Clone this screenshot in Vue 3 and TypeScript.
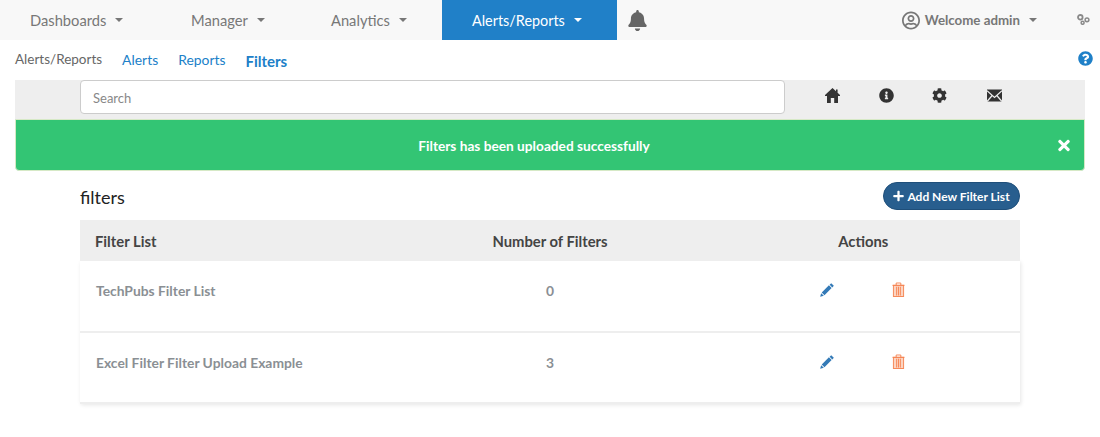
<script setup lang="ts">
interface Row { name: string; count: number }
const navItems: { label: string; active?: boolean; width: number }[] = [
  { label: 'Dashboards', width: 161 },
  { label: 'Manager', width: 140 },
  { label: 'Analytics', width: 141 },
  { label: 'Alerts/Reports', active: true, width: 175 },
]
const rows: Row[] = [
  { name: 'TechPubs Filter List', count: 0 },
  { name: 'Excel Filter Filter Upload Example', count: 3 },
]
const trashBars = [5, 7, 9]
</script>

<template>
  <div class="page">
    <header class="nav">
      <a
        v-for="item in navItems"
        :key="item.label"
        class="nav-item"
        :class="{ active: item.active }"
        :style="{ width: item.width + 'px' }"
      >{{ item.label }}<span class="caret"></span></a>
      <svg class="bell" viewBox="0 0 448 512"><path fill="#666" d="M224 512c35.32 0 63.97-28.65 63.97-64H160.03c0 35.35 28.65 64 63.97 64zm215.39-149.71c-19.32-20.76-55.47-51.99-55.47-154.29 0-77.7-54.48-139.9-127.94-155.16V32c0-17.67-14.32-32-31.98-32s-31.98 14.33-31.98 32v20.84C118.56 68.1 64.08 130.3 64.08 208c0 102.3-36.15 133.53-55.47 154.29-6 6.45-8.66 14.16-8.61 21.71.11 16.4 12.98 32 32.1 32h383.8c19.12 0 32-15.6 32.1-32 .05-7.55-2.61-15.27-8.61-21.71z"/></svg>
      <div class="user">
        <svg class="user-icon" viewBox="0 0 496 512"><path fill="#777" d="M248 104c-53 0-96 43-96 96s43 96 96 96 96-43 96-96-43-96-96-96zm0 144c-26.5 0-48-21.5-48-48s21.5-48 48-48 48 21.5 48 48-21.5 48-48 48zm0-240C111 8 0 119 0 256s111 248 248 248 248-111 248-248S385 8 248 8zm0 448c-49.7 0-95.1-18.3-130.1-48.4 14.9-23 40.4-38.6 69.6-39.5 20.8 6.4 40.6 9.6 60.5 9.6s39.7-3.1 60.5-9.6c29.2 1 54.7 16.5 69.6 39.5-35 30.1-80.4 48.4-130.1 48.4zm162.7-84.1c-24.4-31.4-62.1-51.9-105.1-51.9-10.2 0-26 9.6-57.6 9.6-31.5 0-47.4-9.6-57.6-9.6-42.9 0-80.6 20.5-105.1 51.9C61.9 339.2 48 299.2 48 256c0-110.3 89.7-200 200-200s200 89.7 200 200c0 43.2-13.9 83.2-37.3 115.9z"/></svg>
        <span class="welcome">Welcome admin</span><span class="caret"></span>
      </div>
      <svg class="cogs" viewBox="0 0 13 11" fill="none" stroke="#8a8a8a" stroke-width="1.5">
        <circle cx="3.3" cy="3.3" r="2.3" stroke-width="1.8"/>
        <circle cx="10" cy="5.8" r="1.9"/>
        <circle cx="5.6" cy="8.8" r="1.5"/>
      </svg>
    </header>

    <div class="subnav">
      <span class="crumb">Alerts/Reports</span>
      <a class="sublink">Alerts</a>
      <a class="sublink">Reports</a>
      <a class="sublink current">Filters</a>
      <svg class="help" viewBox="0 0 512 512"><path fill="#1f80c8" d="M504 256c0 136.997-111.043 248-248 248S8 392.997 8 256C8 119.083 119.043 8 256 8s248 111.083 248 248zM262.655 90c-54.497 0-89.255 22.957-116.549 63.758-3.536 5.286-2.353 12.415 2.715 16.258l34.699 26.31c5.205 3.947 12.621 3.008 16.665-2.122 17.864-22.658 30.113-35.797 57.303-35.797 20.429 0 45.698 13.148 45.698 32.958 0 14.976-12.363 22.667-32.534 33.976C247.128 238.528 216 254.941 216 296v4c0 6.627 5.373 12 12 12h56c6.627 0 12-5.373 12-12v-1.333c0-28.462 83.186-29.647 83.186-106.667 0-58.002-60.165-102-116.531-102zM256 338c-25.365 0-46 20.635-46 46 0 25.364 20.635 46 46 46s46-20.636 46-46c0-25.365-20.635-46-46-46z"/></svg>
    </div>

    <div class="searchbar">
      <input class="search" placeholder="Search" />
      <div class="tools">
        <svg class="tool" viewBox="0 0 15 15"><path fill="#333" d="M7.5 0 L11 3.2 V1.4 H12.6 V4.7 L15 7 V8 H13 V15 H9.2 V10 H5.8 V15 H2 V8 H0 V7 Z"/></svg>
        <svg class="tool" viewBox="0 0 512 512"><path fill="#333" d="M256 8C119.043 8 8 119.083 8 256c0 136.997 111.043 248 248 248s248-111.003 248-248C504 119.083 392.957 8 256 8zm0 110c23.196 0 42 18.804 42 42s-18.804 42-42 42-42-18.804-42-42 18.804-42 42-42zm56 254c0 6.627-5.373 12-12 12h-88c-6.627 0-12-5.373-12-12v-24c0-6.627 5.373-12 12-12h12v-64h-12c-6.627 0-12-5.373-12-12v-24c0-6.627 5.373-12 12-12h64c6.627 0 12 5.373 12 12v100h12c6.627 0 12 5.373 12 12v24z"/></svg>
        <svg class="tool" viewBox="0 0 512 512"><path fill="#333" d="M487.4 315.7l-42.6-24.6c4.3-23.2 4.3-47 0-70.2l42.6-24.6c4.9-2.8 7.1-8.6 5.5-14-11.1-35.6-30-67.8-54.7-94.6-3.8-4.1-10-5.1-14.8-2.3L380.8 110c-17.9-15.4-38.5-27.3-60.8-35.1V25.8c0-5.6-3.9-10.5-9.4-11.7-36.7-8.2-74.3-7.8-109.2 0-5.5 1.2-9.4 6.1-9.4 11.7V75c-22.2 7.9-42.8 19.8-60.8 35.1L88.7 85.5c-4.9-2.8-11-1.9-14.8 2.3-24.7 26.7-43.6 58.9-54.7 94.6-1.7 5.4.6 11.2 5.5 14L67.3 221c-4.3 23.2-4.3 47 0 70.2l-42.6 24.6c-4.9 2.8-7.1 8.6-5.5 14 11.1 35.6 30 67.8 54.7 94.6 3.8 4.1 10 5.1 14.8 2.3l42.6-24.6c17.9 15.4 38.5 27.3 60.8 35.1v49.2c0 5.6 3.9 10.5 9.4 11.7 36.7 8.2 74.3 7.8 109.2 0 5.5-1.2 9.4-6.1 9.4-11.7v-49.2c22.2-7.9 42.8-19.8 60.8-35.1l42.6 24.6c4.9 2.8 11 1.9 14.8-2.3 24.7-26.7 43.6-58.9 54.7-94.6 1.5-5.5-.7-11.3-5.6-14.1zM256 336c-44.1 0-80-35.9-80-80s35.9-80 80-80 80 35.9 80 80-35.9 80-80 80z"/></svg>
        <svg class="tool" viewBox="0 0 15 12">
          <rect x="0" y="0" width="15" height="12" fill="#333"/>
          <path d="M0 1.2 L7.5 8 L15 1.2 M0 12 L5.2 6 M15 12 L9.8 6" stroke="#eee" stroke-width="1.2" fill="none"/>
        </svg>
      </div>
    </div>

    <div class="alert">
      <span>Filters has been uploaded successfully</span>
      <svg class="close" viewBox="0 0 352 512"><path fill="#fff" d="M242.72 256l100.07-100.07c12.28-12.28 12.28-32.19 0-44.48l-22.24-22.24c-12.28-12.28-32.19-12.28-44.48 0L176 189.28 75.93 89.21c-12.28-12.28-32.19-12.28-44.48 0L9.21 111.45c-12.28 12.28-12.28 32.19 0 44.48L109.28 256 9.21 356.07c-12.28 12.28-12.28 32.19 0 44.48l22.24 22.24c12.28 12.28 32.2 12.28 44.48 0L176 322.72l100.07 100.07c12.28 12.28 32.2 12.28 44.48 0l22.24-22.24c12.28-12.28 12.28-32.19 0-44.48L242.72 256z"/></svg>
    </div>

    <main class="content">
      <div class="title-row">
        <h1 class="title">filters</h1>
        <button class="add">
          <svg class="plus" viewBox="0 0 448 512"><path fill="#fff" d="M416 208H272V64c0-17.67-14.33-32-32-32h-32c-17.67 0-32 14.33-32 32v144H32c-17.67 0-32 14.33-32 32v32c0 17.67 14.33 32 32 32h144v144c0 17.67 14.33 32 32 32h32c17.67 0 32-14.33 32-32V304h144c17.67 0 32-14.33 32-32v-32c0-17.67-14.33-32-32-32z"/></svg>
          Add New Filter List
        </button>
      </div>
      <div class="table">
        <div class="thead">
          <div class="head-first">Filter List</div>
          <div class="mid">Number of Filters</div>
          <div class="mid">Actions</div>
        </div>
        <div class="tbody">
          <div v-for="row in rows" :key="row.name" class="trow">
            <div class="first">{{ row.name }}</div>
            <div class="mid">{{ row.count }}</div>
            <div class="actions">
              <svg class="pencil" viewBox="0 0 16 16">
                <path fill="#337ab7" d="M0.2 15.8 L1.3 11.6 L4.4 14.7 Z M2 10.9 L10.2 2.7 L13.3 5.8 L5.1 14 Z M11 1.9 L12.8 0.2 L15.8 3.2 L14.1 5 Z"/>
              </svg>
              <svg class="trash" viewBox="0 0 14 16" fill="none" stroke="#f58350" stroke-width="1">
                <rect x="1.5" y="3.5" width="11" height="12" fill="#f58350" fill-opacity=".35"/>
                <path d="M0.5 3.5H13.5M4.5 3.5V1H9.5V3.5" />
                <path v-for="x in trashBars" :key="x" :d="`M${x} 5V14.5`" />
              </svg>
            </div>
          </div>
        </div>
      </div>
    </main>
  </div>
</template>

<style scoped>
.page { width: 1100px; height: 437px; overflow: hidden; background: #fff; font-family: "Lato", "Liberation Sans", sans-serif; }
.nav { height: 40px; background: #f8f8f8; display: flex; align-items: center; }
.nav-item { height: 40px; box-sizing: border-box; display: flex; align-items: center; padding-left: 30px; font-size: 14.7px; color: #777; }
.nav-item.active { background: #2080c8; color: #fff; font-size: 14.4px; }
.caret { display: inline-block; margin-left: 9px; width: 0; height: 0; border-left: 4.5px solid transparent; border-right: 4.5px solid transparent; border-top: 4.5px solid currentColor; }
.bell { width: 19px; height: 21px; margin-left: 11px; }
.user { margin-left: auto; display: flex; align-items: center; color: #777; font-size: 13.3px; font-weight: 700; }
.user-icon { width: 18px; height: 19px; margin-right: 5px; }
.cogs { width: 13px; height: 11px; margin: 0 10px 0 40px; position: relative; top: -1px; }
.subnav { height: 40px; display: flex; align-items: center; padding-left: 15px; position: relative; font-size: 13.5px; }
.crumb { color: #666; margin-right: 20px; position: relative; top: -1px; }
.sublink { color: #2080c8; margin-right: 20px; position: relative; top: -1px; font-size: 13.9px; }
.sublink.current { font-weight: 700; top: 1px; font-size: 15px; }
.help { width: 15px; height: 15px; position: absolute; right: 7px; top: 11px; }
.searchbar { margin: 0 15px; height: 39px; background: #eee; display: flex; padding-left: 65px; }
.search { width: 705px; height: 34px; box-sizing: border-box; border: 1px solid #ccc; border-radius: 4px; padding: 2px 12px 0; font: 13px "Lato", sans-serif; background: #fff; color: #888; outline: none; }
.search::placeholder { color: #888; }
.tools { display: flex; gap: 39px; padding: 8px 0 0 40px; }
.tool { width: 15px; height: 15px; }
.tool:nth-child(3) { margin-left: -1px; margin-right: 1px; }
.alert { margin: 0 15px; height: 52px; box-sizing: border-box; padding-right: 32px; background: #33c574; border: 1px solid #d6e9c6; border-radius: 0 0 4px 4px; color: #fff; font-size: 13.7px; font-weight: 700; display: flex; align-items: center; justify-content: center; position: relative; }
.close { position: absolute; right: 14px; top: 17px; width: 12px; height: 17px; }
.content { padding: 11px 80px 0; }
.title-row { height: 38px; display: flex; justify-content: space-between; align-items: flex-start; }
.title { margin: 4px 0 0; font-size: 18px; font-weight: 400; color: #222; line-height: 22px; }
.add { height: 28px; width: 137px; padding: 0; border: 1px solid #1f4f7a; border-radius: 14px; background: #285e8e; color: #fff; font: 700 12px "Lato", sans-serif; display: flex; align-items: center; justify-content: center; gap: 3px; }
.plus { width: 11px; height: 12px; }
.thead { position: relative; height: 41px; background: #eee; display: grid; grid-template-columns: repeat(3, 1fr); align-items: center; font-size: 14.8px; font-weight: 700; color: #444; }
.head-first { padding-left: 15px; }
.first { padding-left: 16px; }
.mid { text-align: center; }
.tbody { box-shadow: 1px 1px 4px rgba(0,0,0,.1); }
.trow { height: 72px; box-sizing: border-box; display: grid; grid-template-columns: repeat(3, 1fr); padding-top: 22px; border-bottom: 2px solid #eee; font-size: 13.85px; font-weight: 700; color: #8a8f94; line-height: 16px; }
.trow:last-child { height: 71px; }
.actions { display: flex; justify-content: center; gap: 58px; padding-right: 2px; }
.pencil { width: 14px; height: 14px; }
.trash { width: 13px; height: 15px; margin-top: -1px; }
</style>
